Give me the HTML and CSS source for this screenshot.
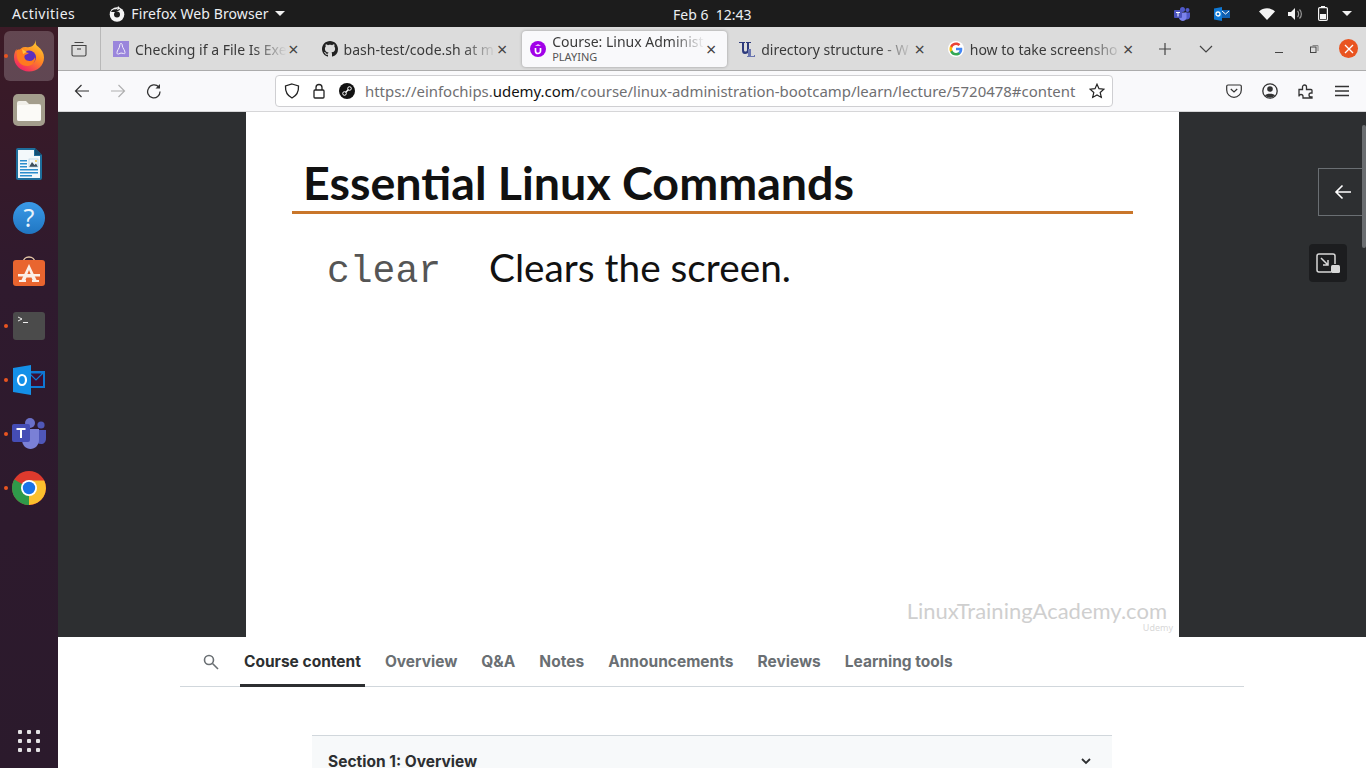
FILE: index.html
```html
<!DOCTYPE html>
<html lang="en">
<head>
  <meta charset="UTF-8" />
  <title>Course: Linux Administration Bootcamp</title>
  <link rel="stylesheet" href="styles.css">
</head>
<body>

<!-- Gnome top bar -->
<header class="topbar">
  <span class="activities">Activities</span>
  <div class="app-menu">
    <svg width="16" height="16" viewBox="0 0 16 16"><circle cx="8" cy="8.500" r="7.300" fill="#f4f4f4"/><circle cx="8" cy="8.500" r="3" fill="#1c1c1c"/><path d="M2 6c1-2 3-3 5-2.500L10 1l1 3-4 2z" fill="#1c1c1c"/><path d="M9 0c1 1 2 2 2 3L8 4z" fill="#f4f4f4"/></svg>
    <span>Firefox Web Browser</span>
    <i class="caret"></i>
  </div>
  <div class="clock">Feb 6&nbsp;&nbsp;12:43</div>
  <div class="tray">
    <svg class="tray-teams" width="16" height="14" viewBox="0 0 16 14"><circle cx="8.500" cy="2.500" r="2.500" fill="#5059c9"/><circle cx="13.500" cy="3" r="2" fill="#5059c9"/><path d="M11 5.500h5v4c0 2-1.500 3-3 3s-2-.5-2-1z" fill="#5059c9"/><path d="M5 5.500h7.500v5c0 2-2 3.500-3.700 3.500S5 12.500 5 10.500z" fill="#7b83eb"/><rect x="0" y="3" width="8" height="8" rx="1" fill="#4b53bc"/><path d="M2 5h4v1H4.500v3.500h-1V6H2z" fill="#fff"/></svg>
    <svg class="tray-outlook" width="16" height="14" viewBox="0 0 16 14"><rect x="7" y="3" width="9" height="8" fill="#0f5fb0"/><path d="M8 4l3.500 3L15 4" fill="none" stroke="#fff"/><path d="M0 1.500L8 0v14L0 12.500z" fill="#0f78d4"/><circle cx="4" cy="7" r="2" fill="none" stroke="#fff" stroke-width="1.300"/></svg>
    <svg class="tray-wifi" width="16" height="12" viewBox="0 0 16 12"><path d="M0 3.500C4.500-.8 11.500-.8 16 3.500L8 12z" fill="#f4f4f4"/></svg>
    <svg class="tray-volume" width="15" height="12" viewBox="0 0 15 12"><path d="M0 4h3l4-4v12L3 8H0z" fill="#f4f4f4"/><path d="M9.500 3c1.500 1.500 1.500 4.500 0 6M11.500 1.500c2.500 2.500 2.500 6.500 0 9" fill="none" stroke="#999" stroke-width="1.200"/></svg>
    <svg class="tray-battery" width="10" height="15" viewBox="0 0 10 15"><path d="M3 0h4v1.500H3z" fill="#f4f4f4"/><rect x=".6" y="1.600" width="8.800" height="12.800" rx="1.200" fill="none" stroke="#f4f4f4" stroke-width="1.200"/><rect x="2" y="8" width="6" height="5" fill="#f4f4f4"/></svg>
    <i class="caret"></i>
  </div>
</header>

<div class="desktop">

  <!-- Launcher -->
  <nav class="dock">
    <div class="dock-item active running">
      <svg width="32" height="34" viewBox="0 0 32 32"><defs><linearGradient id="ffa" x1="0.800" y1="0" x2="0.200" y2="1"><stop offset="0" stop-color="#ffd234"/><stop offset=".45" stop-color="#ff8a22"/><stop offset="1" stop-color="#f0186e"/></linearGradient></defs><path d="M23 0c0 3-1 4.500 2 6.500 4 3 6 7 6 11 0 8-6.500 14-15 14S1 25 1 17c0-3 1-6 2.500-8 0 2 .5 3 1.500 3.500C6.500 8.500 10 6.500 13 7c3 .5 5 0 7-1.500 1.500-1.500 2.500-3.500 3-5.500z" fill="url(#ffa)"/><circle cx="16" cy="17.500" r="7" fill="#5b2fbf"/><path d="M4 10c3-1 6 0 7 2l5 1c-2 1.500-4 1.500-4.500 3-.5 2 1 5 5 5 3 0 5-2 5.500-4 1 5-3 9-7.500 9C8 26 4 21 4 16z" fill="#ff7a1f"/><path d="M9 9l5 3-4 2z" fill="#ffc23a"/></svg>
    </div>
    <div class="dock-item">
      <svg width="32" height="32" viewBox="0 0 32 32"><rect width="32" height="32" rx="5" fill="#a39d8c"/><path d="M4 9a2 2 0 012-2h7l3 3h10a2 2 0 012 2v13a2 2 0 01-2 2H6a2 2 0 01-2-2z" fill="#f1efe9"/><rect x="4" y="11" width="24" height="16" rx="2" fill="#fbfaf7"/></svg>
    </div>
    <div class="dock-item">
      <svg width="26" height="32" viewBox="0 0 26 32"><path d="M2 0h17l7 7v23a2 2 0 01-2 2H2a2 2 0 01-2-2V2a2 2 0 012-2z" fill="#1e6e9c"/><path d="M2 2h16v6h6v22H2z" fill="#f3f8fb"/><path d="M19 0l7 7h-7z" fill="#134e73"/><path d="M4 12h7v1.500H4zM4 15h7v1.500H4zM4 18h7v1.500H4zM4 21h18v1.500H4zM4 24h18v1.500H4zM4 27h12v1.500H4z" fill="#2a8ccc"/><path d="M13 19l3-5 2.500 3 1.500-1.500 2 3.500z" fill="#3f4f5c"/><rect x="13" y="11" width="9" height="8" fill="none" stroke="#a9c9dd" stroke-width=".6"/><circle cx="20" cy="13" r="1" fill="#f2c33f"/></svg>
    </div>
    <div class="dock-item">
      <svg width="32" height="32" viewBox="0 0 32 32"><defs><linearGradient id="hlp" x1="0" y1="0" x2="0" y2="1"><stop offset="0" stop-color="#3a9ae8"/><stop offset="1" stop-color="#2076c2"/></linearGradient></defs><circle cx="16" cy="16" r="16" fill="url(#hlp)"/><text x="16" y="25" text-anchor="middle" class="icon-text" font-size="25" fill="#e8f3fb">?</text></svg>
    </div>
    <div class="dock-item">
      <svg class="dock-bag" width="32" height="30" viewBox="0 0 32 30"><path d="M10 7c0-8 12-8 12 0" fill="none" stroke="#e6c9a8" stroke-width="1.500"/><rect y="4" width="32" height="26" rx="3" fill="#e9652f"/><path d="M16 8l8 17h-4l-1.500-3.500h-5L12 25H8zM16 14l-2 5h4z" fill="#fbeee6"/><rect x="5" y="18" width="22" height="2.500" fill="#fbeee6"/><rect x="6" y="24" width="7" height="2" fill="#fbeee6"/><rect x="19" y="24" width="7" height="2" fill="#fbeee6"/></svg>
    </div>
    <div class="dock-item running">
      <svg width="32" height="28" viewBox="0 0 32 28"><rect width="32" height="28" rx="3" fill="#4b4b4b"/><path d="M5 5l4 2-4 2" fill="none" stroke="#eee" stroke-width="1"/><path d="M10 10h5v1h-5z" fill="#eee"/></svg>
    </div>
    <div class="dock-item running">
      <svg width="32" height="30" viewBox="0 0 32 30"><rect x="14" y="6" width="18" height="17" fill="#0f78d4"/><path d="M16 8l7 7 7-7v13H16z" fill="#3b0f33"/><path d="M16 8h14l-7 7z" fill="#3b0f33" stroke="#0f78d4" stroke-width="1.200"/><path d="M0 3l18-3v30L0 27z" fill="#1490e8"/><ellipse cx="9" cy="15" rx="4" ry="5" fill="none" stroke="#fff" stroke-width="2.200"/></svg>
    </div>
    <div class="dock-item running">
      <svg width="34" height="32" viewBox="0 0 34 32"><circle cx="18" cy="5" r="5" fill="#6a70c8"/><circle cx="29" cy="7" r="3.600" fill="#4f57b8"/><path d="M24 12h10v8c0 4-2 6-5 6s-5-2-5-4z" fill="#4f57b8"/><path d="M10 11h17v11c0 5-4 9-8.500 9S10 27 10 22z" fill="#7a80d6"/><rect y="6" width="18" height="18" rx="2" fill="#454db5"/><path d="M4.500 10h9v2H10v8H8v-8H4.500z" fill="#fff"/></svg>
    </div>
    <div class="dock-item running">
      <svg width="34" height="34" viewBox="0 0 34 34"><circle cx="17" cy="17" r="17" fill="#dd3a2d"/><path d="M17 17L2.300 8.500A17 17 0 0017 34l8-17z" fill="#2f9a4a"/><path d="M17 9.500h15.200A17 17 0 0117 34z" fill="#fbc02d"/><circle cx="17" cy="17" r="8" fill="#fff"/><circle cx="17" cy="17" r="6.200" fill="#1a73e8"/></svg>
    </div>
    <div class="dock-grid">
      <i></i><i></i><i></i><i></i><i></i><i></i><i></i><i></i><i></i>
    </div>
  </nav>

  <main class="browser">

    <!-- Firefox tab strip -->
    <div class="tabbar">
      <div class="tab-list-btn">
        <svg width="16" height="16" viewBox="0 0 16 16" fill="none" stroke="#444" stroke-width="1.100"><path d="M3.500 1.500h9M1 4.500h14v9a1.500 1.500 0 01-1.500 1.500h-11A1.500 1.500 0 011 13.500z"/><path d="M6 8h4"/></svg>
      </div>
      <div class="tab">
        <svg class="favicon" width="16" height="16" viewBox="0 0 16 16"><rect width="16" height="16" fill="#9a86dc"/><path d="M8 2.500c1 0 1.300 1 1.300 2.500.4 2 2.700 4.500 2.700 6.500 0 1.500-1 1.500-1.500 1L8 12l-2.500 1c-.5.300-1.500.300-1.500-1.500 0-2 2.300-4 2.700-6.500C6.700 3.500 7 2.500 8 2.500z" fill="none" stroke="#f3f0fc"/></svg>
        <span class="tab-title">Checking if a File Is Exe</span>
        <span class="tab-close">×</span>
      </div>
      <div class="tab">
        <svg class="favicon" width="16" height="16" viewBox="0 0 16 16"><path fill="#222" d="M8 0C3.58 0 0 3.58 0 8c0 3.54 2.29 6.53 5.47 7.59.4.07.55-.17.55-.38 0-.19-.01-.82-.01-1.49-2.01.37-2.53-.49-2.69-.94-.09-.23-.48-.94-.82-1.13-.28-.15-.68-.52-.01-.53.63-.01 1.08.58 1.23.82.72 1.21 1.87.87 2.33.66.07-.52.28-.87.51-1.07-1.78-.2-3.64-.89-3.64-3.95 0-.87.31-1.59.82-2.15-.08-.2-.36-1.02.08-2.12 0 0 .67-.21 2.2.82.64-.18 1.32-.27 2-.27.68 0 1.36.09 2 .27 1.53-1.04 2.2-.82 2.2-.82.44 1.1.16 1.92.08 2.12.51.56.82 1.27.82 2.15 0 3.07-1.87 3.75-3.65 3.95.29.25.54.73.54 1.48 0 1.07-.01 1.93-.01 2.2 0 .21.15.46.55.38A8.013 8.013 0 0016 8c0-4.42-3.58-8-8-8z"/></svg>
        <span class="tab-title">bash-test/code.sh at m</span>
        <span class="tab-close">×</span>
      </div>
      <div class="tab tab-active">
        <svg class="favicon" width="16" height="16" viewBox="0 0 16 16"><circle cx="8" cy="8" r="8" fill="#a100e8"/><path d="M5.500 7v3a2.500 2.500 0 005 0V7" fill="none" stroke="#fff" stroke-width="1.700"/><path d="M8 3.200l3 1.600H5z" fill="#fff"/></svg>
        <div class="tab-text">
          <span class="tab-title">Course: Linux Administ</span>
          <span class="tab-sub">PLAYING</span>
        </div>
        <span class="tab-close">×</span>
      </div>
      <div class="tab">
        <svg class="favicon" width="16" height="16" viewBox="0 0 16 16"><path d="M0 1h6v1H5v7c0 2 3 2 3 0V2H7V1h5v1h-2v7c0 3-2 4-4 4s-3-1-3-4V2H0z" fill="#2d3a7c"/><path d="M9 8h3v7h3v-1h1v2H8v-1h1z" fill="#6a76b0"/></svg>
        <span class="tab-title">directory structure - W</span>
        <span class="tab-close">×</span>
      </div>
      <div class="tab">
        <svg class="favicon" width="16" height="16" viewBox="-2 -2 22 22"><circle cx="9" cy="9" r="11" fill="#fff"/><path fill="#4285F4" d="M17.640 9.200c0-.64-.06-1.250-.16-1.840H9v3.480h4.840a4.140 4.140 0 01-1.800 2.720v2.260h2.920c1.700-1.570 2.680-3.870 2.680-6.620z"/><path fill="#34A853" d="M9 18c2.430 0 4.470-.8 5.960-2.180l-2.920-2.260c-.8.540-1.840.86-3.040.86-2.340 0-4.330-1.580-5.040-3.700H.96v2.330A9 9 0 009 18z"/><path fill="#FBBC05" d="M3.960 10.720A5.400 5.400 0 013.680 9c0-.6.1-1.180.28-1.720V4.950H.96A9 9 0 000 9c0 1.450.35 2.830.96 4.050l3-2.330z"/><path fill="#EA4335" d="M9 3.580c1.320 0 2.500.45 3.440 1.350l2.580-2.580C13.460.89 11.430 0 9 0A9 9 0 00.96 4.950l3 2.330C4.670 5.160 6.660 3.580 9 3.580z"/></svg>
        <span class="tab-title">how to take screensho</span>
        <span class="tab-close">×</span>
      </div>
      <svg class="tab-new" width="14" height="14" viewBox="0 0 14 14"><path d="M7 1v12M1 7h12" stroke="#444" stroke-width="1.200"/></svg>
      <svg class="tab-down" width="14" height="8" viewBox="0 0 14 8"><path d="M1 1l6 6 6-6" fill="none" stroke="#444" stroke-width="1.200"/></svg>
      <div class="win-controls">
        <svg class="win-min" width="10" height="10" viewBox="0 0 10 10"><path d="M1 8.500h8" stroke="#444"/></svg>
        <svg width="10" height="10" viewBox="0 0 10 10"><rect x="1.500" y="3" width="5.500" height="5.500" fill="none" stroke="#444"/><path d="M3.500 1.500H9V7" fill="none" stroke="#888"/></svg>
        <div class="win-close"><svg width="10" height="10" viewBox="0 0 10 10"><path d="M1 1l8 8M9 1l-8 8" stroke="#fff" stroke-width="1.300"/></svg></div>
      </div>
    </div>

    <!-- Toolbar and url bar -->
    <div class="toolbar">
      <svg class="nav-back" width="16" height="14" viewBox="0 0 16 14" fill="none" stroke="#333" stroke-width="1.200"><path d="M15 7H1.500M7.500 1l-6 6 6 6"/></svg>
      <svg class="nav-forward" width="16" height="14" viewBox="0 0 16 14" fill="none" stroke="#b0b0b0" stroke-width="1.200"><path d="M1 7h13.500M8.500 1l6 6-6 6"/></svg>
      <svg class="nav-reload" width="16" height="16" viewBox="0 0 16 16" fill="none" stroke="#333" stroke-width="1.300"><path d="M14 8.500A6.200 6.200 0 112.500 5.500 6.200 6.200 0 0112.800 4"/><path d="M14 1v4.500H9.500" fill="#333" stroke="none"/></svg>
      <div class="urlbar">
        <svg class="url-shield" width="16" height="16" viewBox="0 0 16 16"><path d="M8 1l6.500 2c.3 5.500-1.500 9.500-6.500 12C3 12.500 1.200 8.500 1.500 3z" fill="none" stroke="#222" stroke-width="1.300"/></svg>
        <svg class="url-lock" width="14" height="16" viewBox="0 0 14 16"><rect x="2" y="7" width="10" height="8" rx="1" fill="none" stroke="#222" stroke-width="1.300"/><path d="M4 7V4.500a3 3 0 016 0V7" fill="none" stroke="#222" stroke-width="1.300"/></svg>
        <svg class="url-perm" width="16" height="16" viewBox="0 0 16 16"><circle cx="8" cy="8" r="8" fill="#111"/><path d="M5 11l6-6" stroke="#fff" stroke-width="1.500"/><circle cx="5.500" cy="10.500" r="1.800" fill="#111" stroke="#fff"/><circle cx="10.500" cy="5.500" r="1.800" fill="#111" stroke="#fff"/></svg>
        <div class="url-text">https://einfochips.<b>udemy.com</b>/course/linux-administration-bootcamp/learn/lecture/5720478#content</div>
        <svg class="url-star" width="16" height="16" viewBox="0 0 16 16"><path d="M8 1.200l2 4.500 4.900.5-3.700 3.300 1.100 4.900L8 12l-4.300 2.400 1.100-4.900L1.100 6.200 6 5.700z" fill="none" stroke="#222" stroke-width="1.200"/></svg>
      </div>
      <div class="tool-icons">
        <svg width="16" height="14" viewBox="0 0 16 14" fill="none" stroke="#333" stroke-width="1.200"><path d="M2 1h12a1.300 1.300 0 011.300 1.300V6A7.300 7.300 0 01.700 6V2.300A1.300 1.300 0 012 1z"/><path d="M4.800 5L8 8l3.200-3"/></svg>
        <svg width="16" height="16" viewBox="0 0 16 16"><circle cx="8" cy="8" r="7.200" fill="none" stroke="#333" stroke-width="1.300"/><circle cx="8" cy="6" r="2.800" fill="#333"/><path d="M3 12.500c1-2.500 9-2.500 10 0-2.500 2.500-7.500 2.500-10 0z" fill="#333"/></svg>
        <svg width="16" height="16" viewBox="0 0 16 16" fill="none" stroke="#333" stroke-width="1.300"><path d="M1 6.500h3.500V4a2 2 0 014 0v2.500H13a1 1 0 011 1V10h-1a2 2 0 000 4h1v1H5v-1.500a2 2 0 00-4 0z"/></svg>
        <svg width="16" height="12" viewBox="0 0 16 12" stroke="#333" stroke-width="1.300"><path d="M1 1.500h14M1 6h14M1 10.500h14"/></svg>
      </div>
    </div>

    <!-- Lecture player -->
    <section class="player">
      <div class="slide">
        <h1 class="slide-title">Essential Linux Commands</h1>
        <div class="slide-rule"></div>
        <div class="slide-row">
          <code class="slide-cmd">clear</code>
          <span class="slide-desc">Clears the screen.</span>
        </div>
        <div class="slide-mark">LinuxTrainingAcademy.com</div>
        <div class="slide-udemy">Udemy</div>
      </div>
      <div class="sidebar-btn">
        <svg width="18" height="16" viewBox="0 0 18 16" fill="none" stroke="#fff" stroke-width="1.600"><path d="M17 8H2M8.500 1.500L2 8l6.500 6.500"/></svg>
      </div>
      <div class="player-scroll"></div>
      <div class="pip-btn">
        <svg width="25" height="21" viewBox="0 0 25 21" fill="none" stroke="#d8d8d8" stroke-width="1.500"><path d="M15 19H3a2 2 0 01-2-2V3a2 2 0 012-2h14a2 2 0 012 2v8"/><path d="M5 5l7 7M12 7v5H7"/><rect x="15" y="12" width="9" height="8" rx="1.500" fill="#d8d8d8" stroke="none"/></svg>
      </div>
    </section>

    <!-- Below the player -->
    <section class="course">
      <div class="course-tabs">
        <svg class="course-search" width="16" height="16" viewBox="0 0 16 16" fill="none" stroke="#6a6f73" stroke-width="1.600"><circle cx="6" cy="6" r="4.500"/><path d="M9.500 9.500l5.500 5.500"/></svg>
        <a class="course-tab selected">Course content</a>
        <a class="course-tab">Overview</a>
        <a class="course-tab">Q&amp;A</a>
        <a class="course-tab">Notes</a>
        <a class="course-tab">Announcements</a>
        <a class="course-tab">Reviews</a>
        <a class="course-tab">Learning tools</a>
      </div>
      <div class="section-head">
        <span>Section 1: Overview</span>
        <svg width="10" height="7" viewBox="0 0 10 7" fill="none" stroke="#2d2f31" stroke-width="1.800"><path d="M1 1l4 4 4-4"/></svg>
      </div>
    </section>

  </main>
</div>

</body>
</html>
```

FILE: styles.css
```css
html, body {
  height: 100%;
}

body {
  margin: 0;
  padding: 0;
  overflow: hidden;
  display: flex;
  flex-direction: column;
  font-family: "Noto Sans", sans-serif;
  background: white;
}

svg {
  display: block;
  flex: none;
}

.icon-text {
  font-family: "Noto Sans", sans-serif;
}

/* Top bar */
.topbar {
  height: 27px;
  flex: none;
  display: flex;
  align-items: center;
  position: relative;
  background: #1c1c1c;
  color: #eceff3;
  font-size: 14px;
}

.activities {
  margin-left: 12px;
  letter-spacing: 0.5px;
}

.app-menu {
  display: flex;
  align-items: center;
  margin-left: 34px;
  gap: 6px;
  letter-spacing: 0.1px;
}

.caret {
  display: block;
  width: 0;
  height: 0;
  border-left: 5px solid transparent;
  border-right: 5px solid transparent;
  border-top: 5px solid #f0f0f0;
}

.clock {
  position: absolute;
  left: 673px;
  top: 5px;
  font-size: 14px;
}

.tray {
  margin-left: auto;
  display: flex;
  align-items: center;
  padding-right: 14px;
}

.tray-teams { margin-right: 24px; }
.tray-outlook { margin-right: 29px; }
.tray-wifi { margin-right: 13px; }
.tray-volume { margin-right: 15px; }
.tray-battery { margin-right: 14px; }

/* Launcher */
.desktop {
  flex: 1;
  display: flex;
  min-height: 0;
}

.dock {
  width: 58px;
  flex: none;
  display: flex;
  flex-direction: column;
  align-items: center;
  padding-top: 2px;
  box-sizing: border-box;
  background: linear-gradient(#3c1a26, #2f1a2e 35%, #2b1a2c);
}

.dock-item {
  width: 50px;
  height: 54px;
  display: flex;
  align-items: center;
  justify-content: center;
  position: relative;
}

.dock-item.active::before {
  content: "";
  position: absolute;
  top: 2px;
  bottom: 2px;
  left: 0;
  right: 0;
  background: rgba(255, 255, 255, 0.2);
  border-radius: 6px;
}

.dock-item svg {
  position: relative;
}

.dock-item .dock-bag {
  margin-top: -3px;
}

.dock-item.running::after {
  content: "";
  position: absolute;
  left: 0;
  top: 25px;
  width: 4px;
  height: 4px;
  border-radius: 50%;
  background: #e95420;
}

.dock-grid {
  margin-top: auto;
  margin-bottom: 16px;
  display: grid;
  grid-template-columns: repeat(3, 4px);
  gap: 5px;
}

.dock-grid i {
  display: block;
  width: 4px;
  height: 4px;
  border-radius: 1px;
  background: #e4e2e4;
}

/* Browser */
.browser {
  flex: 1;
  min-width: 0;
  display: flex;
  flex-direction: column;
}

.tabbar {
  height: 43px;
  flex: none;
  display: flex;
  align-items: center;
  background: #dcdcdc;
  border-bottom: 1px solid #acacac;
  color: #3a3a3a;
}

.tab-list-btn {
  width: 42px;
  height: 43px;
  flex: none;
  display: flex;
  align-items: center;
  justify-content: center;
  border-right: 1px solid #b8b8b8;
  margin-right: 3px;
}

.tab {
  width: 208.6px;
  height: 36px;
  flex: none;
  box-sizing: border-box;
  display: flex;
  align-items: center;
  gap: 6px;
  padding: 0 14px 0 9px;
  font-size: 14px;
}

.tab-title {
  flex: 1;
  min-width: 0;
  margin-top: 2px;
  white-space: nowrap;
  overflow: hidden;
  -webkit-mask-image: linear-gradient(to right, black 78%, transparent);
  mask-image: linear-gradient(to right, black 78%, transparent);
}

.tab-close {
  flex: none;
  margin-left: -5px;
  font-size: 18px;
  line-height: 16px;
  color: #444;
}

.tab-active {
  width: 205px;
  margin: 0 3px 0 1px;
  padding: 0 11px 0 8px;
  background: #f9f9fb;
  border-radius: 4px;
  box-shadow: 0 0 3px rgba(0, 0, 0, 0.3);
}

.tab-text {
  flex: 1;
  min-width: 0;
  display: flex;
  flex-direction: column;
}

.tab-active .tab-title {
  flex: none;
  margin-top: 0;
  line-height: 17px;
}

.tab-sub {
  font-size: 11px;
  line-height: 14px;
  color: #555;
}

.tab-new {
  margin-left: 11px;
}

.tab-down {
  margin-left: 27px;
}

.win-controls {
  margin-left: auto;
  display: flex;
  align-items: center;
  gap: 20px;
  padding-right: 8px;
}

.win-min {
  margin-right: 5px;
}

.win-close {
  width: 19px;
  height: 19px;
  border-radius: 50%;
  background: #e95420;
  display: flex;
  align-items: center;
  justify-content: center;
}

.toolbar {
  height: 41px;
  flex: none;
  display: flex;
  align-items: center;
  box-sizing: border-box;
  padding-left: 16px;
  background: #f9f9fb;
  border-bottom: 1px solid #d6d6d8;
}

.nav-forward { margin-left: 20px; }
.nav-reload { margin-left: 20px; }

.urlbar {
  width: 838px;
  height: 32px;
  margin-left: 113px;
  box-sizing: border-box;
  display: flex;
  align-items: center;
  padding: 0 7px 0 8px;
  background: white;
  border: 1px solid #cfcfd2;
  border-radius: 4px;
}

.url-lock { margin-left: 12px; }
.url-perm { margin-left: 13px; }

.url-text {
  margin-left: 10px;
  flex: 1;
  min-width: 0;
  white-space: nowrap;
  overflow: hidden;
  font-size: 14.95px;
  color: #6f6f72;
}

.url-text b {
  font-weight: 400;
  color: #111;
}

.tool-icons {
  display: flex;
  align-items: center;
  gap: 20px;
  margin-left: 113px;
}

/* Player */
.player {
  height: 525px;
  flex: none;
  position: relative;
  overflow: hidden;
  display: flex;
  padding-left: 188px;
  box-sizing: border-box;
  background: #2d2f31;
}

.slide {
  width: 933px;
  flex: none;
  position: relative;
  box-sizing: border-box;
  padding: 39px 46px 0;
  background: white;
}

.slide-title {
  margin: 0 0 0 11px;
  font-family: Lato, sans-serif;
  font-weight: 700;
  font-size: 46.6px;
  line-height: 62px;
  color: #111;
}

.slide-rule {
  height: 3px;
  margin-top: -2px;
  background: #c9762a;
}

.slide-row {
  display: flex;
  align-items: baseline;
  margin: 30px 0 0 35px;
}

.slide-cmd {
  font-family: "Liberation Mono", monospace;
  font-size: 38px;
  color: #555;
  width: 162px;
}

.slide-desc {
  font-family: Lato, sans-serif;
  font-size: 38.8px;
  color: #111;
}

.slide-mark {
  position: absolute;
  right: 12px;
  bottom: 13px;
  font-family: Lato, sans-serif;
  font-size: 22px;
  color: #cfcfcf;
}

.slide-udemy {
  position: absolute;
  right: 6px;
  bottom: 3px;
  font-size: 9px;
  color: #d8d8d8;
}

.player-scroll {
  position: absolute;
  top: 13px;
  right: 0;
  width: 4px;
  height: 123px;
  background: #6a6d70;
  border-radius: 2px;
}

.sidebar-btn {
  position: absolute;
  top: 56px;
  right: 0;
  width: 48px;
  height: 48px;
  box-sizing: border-box;
  display: flex;
  align-items: center;
  justify-content: center;
  border: 1px solid #6a6f73;
  border-right: 0;
  background: #2d2f31;
}

.pip-btn {
  position: absolute;
  top: 132px;
  right: 19px;
  width: 38px;
  height: 38px;
  display: flex;
  align-items: center;
  justify-content: center;
  background: #1c1d1f;
  border-radius: 4px;
}

/* Course tabs */
.course {
  flex: 1;
  min-height: 0;
  background: white;
  display: flex;
  flex-direction: column;
  overflow: hidden;
}

.course-tabs {
  height: 50px;
  flex: none;
  margin: 0 122px;
  box-sizing: border-box;
  display: flex;
  align-items: stretch;
  border-bottom: 1px solid #d1d7dc;
}

.course-search {
  align-self: center;
  margin: 0 21px 0 23px;
}

.course-tab {
  display: flex;
  align-items: center;
  padding: 2px 4px 0;
  margin-right: 16px;
  margin-bottom: -1px;
  font-family: Inter, sans-serif;
  font-weight: 700;
  font-size: 15.5px;
  color: #6a6f73;
  border-bottom: 3px solid transparent;
  box-sizing: border-box;
}

.course-tab.selected {
  color: #2d2f31;
  border-bottom-color: #2d2f31;
}

.section-head {
  width: 800px;
  flex: none;
  margin: 48px 0 0 254px;
  box-sizing: border-box;
  display: flex;
  align-items: center;
  justify-content: space-between;
  padding: 16px 21px 16px 16px;
  background: #f7f9fa;
  border-top: 1px solid #d1d7dc;
  font-family: Inter, sans-serif;
  font-weight: 700;
  font-size: 15.5px;
  line-height: 19px;
  color: #2d2f31;
}
```
